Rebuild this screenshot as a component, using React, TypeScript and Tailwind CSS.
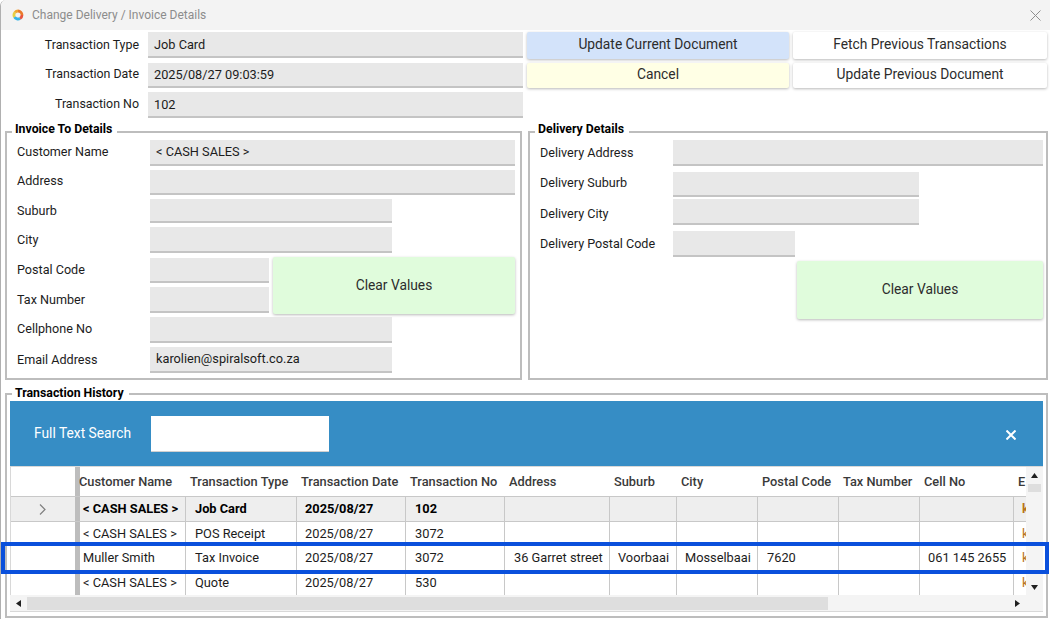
const font = "font-['Roboto',sans-serif]";

function Field({ width, height = "h-[26px]", children }: { width: string; height?: string; children?: React.ReactNode }) {
  return (
    <div className={`${width} ${height} shrink-0 bg-[#e8e8e8] border-b-2 border-[#c4c4c4] pl-[6px] pb-[1px] flex items-center text-[12.75px] text-[#1c1c1c]`}>
      {children}
    </div>
  );
}

function Btn({ className, children }: { className: string; children: React.ReactNode }) {
  return (
    <div className={`${className} rounded-[2px] flex items-center justify-center text-[13.8px] text-[#2c2c2c] shadow-[0_1px_3px_rgba(0,0,0,0.28)]`}>
      {children}
    </div>
  );
}

const invoiceRows = [
  { label: "Customer Name", w: "w-[365px]", h: "h-[26px]", value: "< CASH SALES >", mb: "mb-[4px]", lb: "pb-[2px]" },
  { label: "Address", w: "w-[365px]", h: "h-[25px]", mb: "mb-[4px]", lb: "pb-[2px]" },
  { label: "Suburb", w: "w-[242px]", h: "h-[24px]", mb: "mb-[4px]", lb: "" },
  { label: "City", w: "w-[242px]", h: "h-[26px]", mb: "mb-[4px]", lb: "" },
];

const deliveryRows = [
  { label: "Delivery Address", w: "w-[370px]", h: "h-[26px]", mb: "mb-[6px]", lb: "pt-[1px]" },
  { label: "Delivery Suburb", w: "w-[246px]", h: "h-[25px]", mb: "mb-[2px]", lb: "pb-[2px]" },
  { label: "Delivery City", w: "w-[246px]", h: "h-[26px]", mb: "mb-[6px]", lb: "pt-[4px]" },
  { label: "Delivery Postal Code", w: "w-[122px]", h: "h-[26px]", mb: "mb-[4px]", lb: "pt-[1px]" },
];

const columns = [
  { title: "Customer Name", w: "w-[106px]", head: "ml-[-1px] mr-[1px]", pl: "pl-[3px]" },
  { title: "Transaction Type", w: "w-[111px]", head: "pl-[4px]", pl: "pl-[9px]" },
  { title: "Transaction Date", w: "w-[109px]", head: "pl-[4px]", pl: "pl-[8px]" },
  { title: "Transaction No", w: "w-[99px]", head: "pl-[4px]", pl: "pl-[9px]" },
  { title: "Address", w: "w-[105px]", head: "pl-[4px]", pl: "pl-[9px]" },
  { title: "Suburb", w: "w-[67px]", head: "pl-[4px]", pl: "pl-[8px]" },
  { title: "City", w: "w-[81px]", head: "pl-[4px]", pl: "pl-[8px]" },
  { title: "Postal Code", w: "w-[81px]", head: "pl-[4px]", pl: "pl-[9px]" },
  { title: "Tax Number", w: "w-[81px]", head: "pl-[4px]", pl: "pl-[9px]" },
  { title: "Cell No", w: "w-[94px]", head: "pl-[4px]", pl: "pl-[8px]" },
  { title: "E", w: "w-[12px]", head: "pl-[4px]", pl: "pl-[8px]" },
];

const rows = [
  { h: "h-[25px]", bold: true, cells: ["< CASH SALES >", "Job Card", "2025/08/27", "102", "", "", "", "", "", "", "k"] },
  { h: "h-[24px]", cells: ["< CASH SALES >", "POS Receipt", "2025/08/27", "3072", "", "", "", "", "", "", "k"] },
  { h: "h-[25px]", cells: ["Muller Smith", "Tax Invoice", "2025/08/27", "3072", "36 Garret street", "Voorbaai", "Mosselbaai", "7620", "", "061 145 2655", "k"] },
  { h: "h-[24px]", cells: ["< CASH SALES >", "Quote", "2025/08/27", "530", "", "", "", "", "", "", "k"] },
];

export default function App() {
  return (
    <div className={`${font} relative w-[1050px] h-[619px] overflow-hidden bg-white text-[12.6px] text-[#1c1c1c] border-l border-[#b0b0b0] rounded-tl-[6px]`}>
      {/* Title bar */}
      <div className="h-[30px] bg-[#f3f3f3] flex items-center pl-[11px] pr-[9px] text-[12px] text-[#8c8c8c]">
        <svg width="12" height="12" viewBox="0 0 12 12" fill="none" strokeWidth="2.8">
          <path d="M6 2a4 4 0 0 1 4 4" stroke="#ea7a2c" />
          <path d="M10 6a4 4 0 0 1-2 3.46" stroke="#e8553f" />
          <path d="M8 9.46A4 4 0 0 1 2.5 8" stroke="#35b4e8" />
          <path d="M2.5 8A4 4 0 0 1 3 3.4" stroke="#e6cf45" />
          <path d="M3 3.4A4 4 0 0 1 6 2" stroke="#f0a62e" />
        </svg>
        <span className="ml-[8px]">Change Delivery / Invoice Details</span>
        <svg className="ml-auto" width="11" height="11" viewBox="0 0 11 11" stroke="#8f8f8f" strokeWidth="1">
          <path d="M0.5 0.5l10 10M10.5 0.5l-10 10" />
        </svg>
      </div>

      {/* Header fields and actions */}
      <div className="flex pt-[2px] h-[101px]">
        <div className="w-[147px] shrink-0 flex flex-col items-end pr-[9px] text-[12.4px]">
          <div className="h-[26px] leading-[26px]">Transaction Type</div>
          <div className="h-[26px] leading-[26px] mt-[3px]">Transaction Date</div>
          <div className="h-[26px] leading-[26px] mt-[4px]">Transaction No</div>
        </div>
        <div className="w-[375px] shrink-0 flex flex-col">
          <Field width="w-[375px] pt-[2px]">Job Card</Field>
          <Field width="w-[375px] mt-[5px] pt-[1px]" height="h-[25px]">2025/08/27 09:03:59</Field>
          <Field width="w-[375px] mt-[4px] pt-[2px]">102</Field>
        </div>
        <div className="ml-[4px] w-[262px] flex flex-col gap-[4px]">
          <Btn className="h-[27px] pb-[3px] bg-[#d3e3fa]">Update Current Document</Btn>
          <Btn className="h-[25px] pb-[3px] bg-[#ffffe5]">Cancel</Btn>
        </div>
        <div className="ml-[4px] w-[254px] flex flex-col gap-[4px]">
          <Btn className="h-[27px] pb-[3px] bg-white">Fetch Previous Transactions</Btn>
          <Btn className="h-[25px] pb-[3px] bg-white">Update Previous Document</Btn>
        </div>
      </div>

      {/* Invoice and delivery groups */}
      <div className="flex pl-[4px] gap-[6px]">
        <fieldset className="w-[517px] h-[258px] border-2 border-[#bdbdbd] pl-[10px] pr-[5px] mt-[-9px]">
          <legend className="ml-[-5px] pl-[3px] pr-[5px] pb-[6px] font-bold text-[12.3px] leading-[14px] text-black">Invoice To Details</legend>
          <div className="mt-[-2px]">
            {invoiceRows.map((r) => (
              <div key={r.label} className={`flex items-center ${r.mb}`}>
                <div className={`w-[133px] shrink-0 ${r.lb}`}>{r.label}</div>
                <Field width={r.w} height={r.h}>{r.value}</Field>
              </div>
            ))}
            <div className="flex h-[57px]">
              <div className="w-[133px] shrink-0 flex flex-col">
                <div className="h-[26px] leading-[26px]">Postal Code</div>
                <div className="h-[26px] mt-[4px] leading-[26px]">Tax Number</div>
              </div>
              <div className="flex flex-col gap-[4px] pt-[1px]">
                <Field width="w-[119px]" height="h-[25px]" />
                <Field width="w-[119px]" height="h-[26px]" />
              </div>
              <Btn className="ml-[4px] w-[242px] h-[57px] pb-[1px] bg-[#e0fcdc]">Clear Values</Btn>
            </div>
            <div className="flex items-center mt-[3px]">
              <div className="w-[133px] shrink-0 pb-[2px]">Cellphone No</div>
              <Field width="w-[242px]" />
            </div>
            <div className="flex items-center mt-[4px]">
              <div className="w-[133px] shrink-0">Email Address</div>
              <Field width="w-[242px]">karolien@spiralsoft.co.za</Field>
            </div>
          </div>
        </fieldset>

        <fieldset className="w-[520px] h-[258px] border-2 border-[#bdbdbd] pl-[10px] mt-[-9px]">
          <legend className="ml-[-5px] pl-[3px] pr-[5px] pb-[6px] font-bold text-[12.3px] leading-[14px] text-black">Delivery Details</legend>
          <div className="mt-[-2px]">
            {deliveryRows.map((r) => (
              <div key={r.label} className={`flex items-center ${r.mb}`}>
                <div className={`w-[133px] shrink-0 ${r.lb}`}>{r.label}</div>
                <Field width={r.w} height={r.h} />
              </div>
            ))}
            <div className="flex justify-end pr-[3px]">
              <Btn className="w-[246px] h-[58px] pb-[1px] bg-[#e0fcdc]">Clear Values</Btn>
            </div>
          </div>
        </fieldset>
      </div>

      {/* Transaction history */}
      <div className="pl-[4px] pr-[1px]">
        <fieldset className="w-[1043px] h-[232px] mt-[6px] border-2 border-[#bdbdbd] pl-[3px]">
          <legend className="ml-[2px] pl-[3px] pr-[5px] pb-[2px] font-bold text-[12.3px] leading-[14px] text-black">Transaction History</legend>
          <div className="w-[1033px] mt-[-1px]">
            <div className="h-[65px] bg-[#368dc5] flex items-center pl-[24px] pr-[27px] text-white text-[13.8px]">
              <span className="w-[117px]">Full Text Search</span>
              <div className="w-[178px] h-[36px] bg-white border-b border-[#d0d0d0]"></div>
              <svg className="ml-auto mt-[2px]" width="10" height="10" viewBox="0 0 10 10" stroke="white" strokeWidth="2">
                <path d="M0.5 0.5l9 9M9.5 0.5l-9 9" />
              </svg>
            </div>
            <div className="border-t border-[#d8d8d8] flex h-[129px] text-[12.8px]">
              <div className="w-[1016px] overflow-hidden border-l border-[#d8d8d8]">
                <div className="flex h-[30px] font-medium text-[#3a3a3a] border-b border-[#c8c8c8] items-center">
                  <div className="w-[64px] shrink-0"></div>
                  <div className="w-[5px] self-stretch shrink-0 bg-[#bdbdbd]"></div>
                  {columns.map((c) => (
                    <div key={c.title} className={`${c.w} shrink-0 whitespace-nowrap ${c.head}`}>{c.title}</div>
                  ))}
                </div>
                {rows.map((row, i) => (
                  <div key={i} className={`flex ${row.h} items-center ${i < 3 ? "border-b border-[#c8c8c8]" : ""} ${row.bold ? "bg-[#eeeeee] font-bold text-black" : ""}`}>
                    <div className="w-[64px] shrink-0 self-stretch flex items-center justify-center pr-[2px]">
                      {row.bold && (
                        <svg width="7" height="11" viewBox="0 0 7 11" fill="none" stroke="#808080" strokeWidth="1.2">
                          <path d="M1 0.5l5 5-5 5" />
                        </svg>
                      )}
                    </div>
                    <div className="w-[5px] shrink-0 self-stretch bg-[#bdbdbd]"></div>
                    {columns.map((c, j) => (
                      <div key={c.title} className={`${c.w} shrink-0 self-stretch flex items-center whitespace-nowrap ${c.pl} ${j < 10 ? "border-r border-[#c8c8c8]" : ""}`}>
                        <span className={j === 10 ? "text-[#b8741a]" : ""}>{row.cells[j]}</span>
                      </div>
                    ))}
                  </div>
                ))}
              </div>
              {/* Vertical scrollbar */}
              <div className="w-[17px] bg-[#f4f4f4] flex flex-col items-center text-[#202020]">
                <svg className="mt-[6px]" width="7" height="5" viewBox="0 0 7 5" fill="currentColor"><path d="M3.5 0L7 5H0z" /></svg>
                <div className="w-[13px] h-[8px] mt-[6px] bg-[#dedede]"></div>
                <svg className="mt-auto mb-[5px]" width="7" height="5" viewBox="0 0 7 5" fill="currentColor"><path d="M3.5 5L7 0H0z" /></svg>
              </div>
            </div>
            {/* Horizontal scrollbar */}
            <div className="h-[17px] bg-[#f4f4f4] flex items-center text-[#202020] border-b border-[#d8d8d8]">
              <svg className="ml-[6px]" width="5" height="7" viewBox="0 0 5 7" fill="currentColor"><path d="M0 3.5L5 0v7z" /></svg>
              <div className="ml-[6px] w-[801px] h-[13px] bg-[#dedede]"></div>
              <svg className="ml-[187px]" width="5" height="7" viewBox="0 0 5 7" fill="currentColor"><path d="M5 3.5L0 0v7z" /></svg>
            </div>
          </div>
        </fieldset>
      </div>

      {/* Highlight around the selected row */}
      <div className="absolute left-0 top-[542px] w-[1048px] h-[32px] border-[4px] border-[#0a50dc]"></div>
    </div>
  );
}
